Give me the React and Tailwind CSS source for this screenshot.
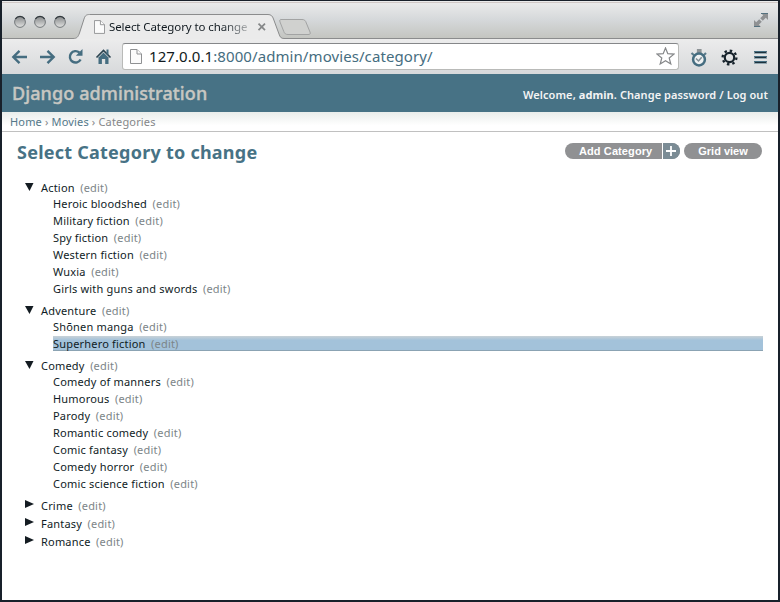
import React from "react";

const categories = [
  {
    name: "Action",
    open: true,
    children: [
      "Heroic bloodshed",
      "Military fiction",
      "Spy fiction",
      "Western fiction",
      "Wuxia",
      "Girls with guns and swords",
    ],
  },
  { name: "Adventure", open: true, children: ["Shōnen manga", "Superhero fiction"] },
  {
    name: "Comedy",
    open: true,
    children: [
      "Comedy of manners",
      "Humorous",
      "Parody",
      "Romantic comedy",
      "Comic fantasy",
      "Comedy horror",
      "Comic science fiction",
    ],
  },
  { name: "Crime", open: false, children: [] },
  { name: "Fantasy", open: false, children: [] },
  { name: "Romance", open: false, children: [] },
];

const selected = "Superhero fiction";

function PageIcon({ className }) {
  return (
    <svg className={className} viewBox="0 0 12 15" fill="#fbfbfb" stroke="#8f9193">
      <path d="M.5.5h6.5l4.500 4.500v9.500H.5z" />
      <path d="M7 .5V5h4.500" />
    </svg>
  );
}

function TabStrip() {
  return (
    <svg className="block h-[38px] w-full shrink-0" viewBox="2 1 776 38" preserveAspectRatio="none">
      <defs>
        <linearGradient id="strip" x1="0" y1="0" x2="0" y2="1">
          <stop offset="0" stopColor="#ececec" />
          <stop offset="0.5" stopColor="#d5d8da" />
          <stop offset="1" stopColor="#c3c4bf" />
        </linearGradient>
        <linearGradient id="light" x1="0" y1="0" x2="0" y2="1">
          <stop offset="0" stopColor="#858789" />
          <stop offset="1" stopColor="#e2e3e2" />
        </linearGradient>
      </defs>
      <rect x="2" y="1" width="776" height="38" fill="url(#strip)" />
      <path d="M2 2.500H778" stroke="#d0c8c6" />
      {[20, 40, 60].map((x) => (
        <g key={x}>
          <circle cx={x} cy="22" r="5.400" fill="url(#light)" stroke="#74797c" />
          <path d={`M${x - 4.600} 18.800A5.600 5.600 0 0 1 ${x + 4.600} 18.800`} fill="none" stroke="#30373c" strokeWidth="1.300" />
        </g>
      ))}
      <path d="M2 38.500H73C77 38.500 78 37 79.500 33L84 19C85 15.500 86.500 14.500 89.500 14.500H268C271 14.500 272.500 16 273.500 19L279 34C280 37 281 38.500 284 38.500H778V39H2Z" fill="#ebebeb" />
      <path d="M2 38.500H73C77 38.500 78 37 79.500 33L84 19C85 15.500 86.500 14.500 89.500 14.500H268C271 14.500 272.500 16 273.500 19L279 34C280 37 281 38.500 284 38.500H778" fill="none" stroke="#8b8c8d" />
      <path d="M281 19.500H302C304.500 19.500 305.500 20.500 306.300 23L310 32C310.800 34 310 34.500 308 34.500H288C285.500 34.500 284.500 33.500 283.800 31.500L280 22C279.500 20 279.800 19.500 281 19.500Z" fill="#d0d1cf" stroke="#a2a3a3" />
      <path d="M258.500 23.700l6.500 6.500M265 23.700l-6.500 6.500" stroke="#858788" strokeWidth="1.700" />
      <g fill="#8f9193">
        <path d="M761 13h7v7l-2.200-2.200-3 3-2.600-2.600 3-3z" />
        <path d="M754 20v7h7l-2.200-2.200 3-3-2.600-2.600-3 3z" />
      </g>
      <path d="M761 13.500h7M754 26.500h6" stroke="#54717f" />
    </svg>
  );
}

function NavIcons() {
  return (
    <svg className="block h-9 w-[120px] shrink-0" viewBox="2 38 120 36" fill="none" stroke="#456d80" strokeWidth="2.400">
      <path d="M27 56H14M19.500 49.800L13.300 56l6.200 6.200" />
      <path d="M40 56H53M47.500 49.800L53.700 56l-6.200 6.200" />
      <path d="M80.600 58.500A5.700 5.700 0 1 1 79.300 51.500" />
      <path d="M82.500 48v6.700h-6.700z" fill="#456d80" stroke="none" />
      <g stroke="none" fill="#456d80">
        <path d="M98.500 56h10v7h-3.300v-5h-3.300v5h-3.400z" />
        <path d="M96.500 56.500L103.500 49.500l7 7" fill="none" stroke="#2b4350" strokeWidth="1.600" />
        <path d="M98.500 56.500L103.500 51.500l5 5zM106.500 48.500h2v5h-2z" />
      </g>
    </svg>
  );
}

function ToolIcons() {
  return (
    <svg className="block h-9 w-[99px] shrink-0" viewBox="679 38 99 36" fill="none">
      <path d="M697.500 52v-3.500h3.500V52" fill="#8d9396" stroke="#8d9396" strokeWidth="1.200" />
      <path d="M691.500 52l2.800 2.500M706 52l-2.500 2.500" stroke="#5c7c8b" strokeWidth="2.200" />
      <circle cx="699" cy="58.500" r="5.900" fill="#eef1f2" stroke="#456d80" strokeWidth="2.500" />
      <path d="M696 57.500l2.500 2.500 3.200-3.800" stroke="#7f8d94" strokeWidth="1.500" />
      <circle cx="729.500" cy="56.500" r="4.700" stroke="#16222b" strokeWidth="2.200" />
      <circle cx="729.500" cy="56.500" r="6.900" stroke="#16222b" strokeWidth="2.300" strokeDasharray="2.500 2.920" />
      {[50, 55, 60].map((y) => (
        <g key={y}>
          <path d={`M754 ${y + 0.5}h13`} stroke="#456d80" />
          <path d={`M754.500 ${y + 1.5}h12`} stroke="#1d323e" />
          <path d={`M754 ${y + 2.500}h13`} stroke="#456d80" strokeOpacity="0.500" />
        </g>
      ))}
    </svg>
  );
}

function BrowserChrome() {
  return (
    <div className="relative flex h-[73px] shrink-0 flex-col">
      <TabStrip />
      <div className="absolute left-[92px] top-[18px] flex h-[16px] w-[160px] items-center">
        <PageIcon className="mr-[4px] h-[14px] w-[11px] shrink-0" />
        <span className="bg-gradient-to-r from-[#111a20] from-80% to-[#b5b7b8] bg-clip-text text-[11.500px] leading-[16px] tracking-[-0.090px] whitespace-nowrap text-transparent">
          Select Category to change
        </span>
      </div>
      <div className="flex h-[35px] items-center bg-gradient-to-b from-[#ececec] to-[#d7d9db]">
        <NavIcons />
        <div className="mb-px flex h-[27px] flex-1 items-center rounded-[3px] border border-[#b9bab8] border-t-[#858789] bg-white pr-[3px] pl-[7px]">
          <PageIcon className="h-[15px] w-[12px]" />
          <span className="ml-[7px] flex-1 text-[15px] leading-[20px] tracking-[0.080px] text-[#456d80]">
            <span className="text-[#111a20]">127.0.0.1</span>:8000/admin/movies/category/
          </span>
          <svg className="h-[19px] w-[19px]" viewBox="0 0 19 19" fill="#fff" stroke="#858789" strokeWidth="1.200">
            <path d="M9.500 1l2.300 5.700 6.200.4-4.800 3.900 1.600 6-5.300-3.300L4.200 17l1.600-6L1 7.100l6.200-.4z" />
          </svg>
        </div>
        <ToolIcons />
      </div>
    </div>
  );
}

function EditLink() {
  return <a className="ml-[5.500px] text-[#7c8588]">(edit)</a>;
}

function Category({ category }) {
  return (
    <li>
      <div className="flex h-[15px] items-center">
        <svg className="mr-[7px] mb-px h-[10px] w-[9px]" viewBox="0 0 9 10" fill="#141c22">
          {category.open ? <path d="M0 1h8.500L4.500 9z" /> : <path d="M0 0v8l9-4z" />}
        </svg>
        <span>{category.name}</span>
        <EditLink />
      </div>
      {category.open && (
        <ul className="mb-[6px] pl-[28px]">
          {category.children.map((name) => (
            <li key={name} className="flex h-[17px] items-center">
              <div
                className={
                  name === selected
                    ? "h-[15px] flex-1 border-b border-[#8ba3b3] bg-gradient-to-b from-[#c9d2d7] to-[#a3c2da] to-30%"
                    : "h-[15px] flex-1"
                }
              >
                {name}
                <EditLink />
              </div>
            </li>
          ))}
        </ul>
      )}
    </li>
  );
}

export default function App() {
  return (
    <div className="flex h-[602px] w-[780px] flex-col border-2 border-t border-[#18202a] bg-white font-['Noto_Sans','Open_Sans',sans-serif]">
      <BrowserChrome />
      <header className="flex h-[38px] shrink-0 items-center justify-between bg-[#477285] pr-[10px] pl-[10px]">
        <h1 className="text-[18px] leading-[24px] font-medium tracking-[0.100px] text-[#c8c7c2] [-webkit-text-stroke:0.400px_#c8c7c2]">
          Django administration
        </h1>
        <p className="mt-[4px] text-[11px] leading-[16px] font-semibold tracking-[0.080px] text-[#f4f4f4]">
          Welcome, <strong className="font-bold">admin</strong>. Change password / Log out
        </p>
      </header>
      <nav className="flex h-[20px] shrink-0 items-center border-b border-[#c0c0c0] bg-gradient-to-b from-[#e9edeb] to-white to-70% pt-[2px] pl-[8px] text-[11px] tracking-[0.160px] whitespace-pre text-[#858789]">
        <span className="text-[#54788a]">Home</span> › <span className="text-[#54788a]">Movies</span> › Categories
      </nav>
      <main className="flex flex-1 flex-col pr-[15px]">
        <div className="flex h-[41px] items-center justify-between pr-px pl-[15px]">
          <h2 className="mb-[2px] text-[18px] leading-[24px] font-bold tracking-[0.240px] text-[#477285]">Select Category to change</h2>
          <div className="mb-[3px] flex h-[16px] gap-[4px] font-['Liberation_Sans',Arial,sans-serif] text-[11px] leading-[17px] font-bold text-white">
            <a className="flex overflow-hidden rounded-full bg-[#909193]">
              <span className="w-[98px] border-r border-white pl-[14px] tracking-[0.100px]">Add Category</span>
              <svg className="h-[16px] w-[17px] bg-[#7b8c95]" viewBox="0 0 17 16" stroke="#fff" strokeWidth="1.800">
                <path d="M8 3v10M3 8h10" />
              </svg>
            </a>
            <a className="w-[78px] rounded-full bg-[#909193] text-center">Grid view</a>
          </div>
        </div>
        <ul className="mt-[7px] flex flex-col pl-[23px] text-[11px] leading-[15px] tracking-[0.190px] text-[#0f1c25] [&>li:nth-child(n+4)]:mb-[3px]">
          {categories.map((c) => (
            <Category key={c.name} category={c} />
          ))}
        </ul>
      </main>
    </div>
  );
}
